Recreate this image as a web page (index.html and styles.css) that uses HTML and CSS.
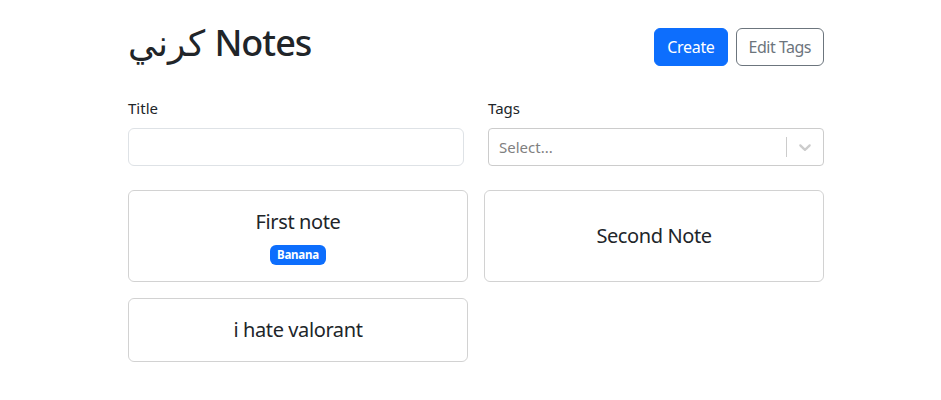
FILE: index.html
```html
<!DOCTYPE html>
<html lang="en">
<head>
<meta charset="utf-8">
<title>Notes</title>
<link rel="stylesheet" href="styles.css">
</head>
<body>
<div class="container">
  <div class="header">
    <h1 class="title">كرني <span class="title-latin">Notes</span></h1>
    <div class="actions">
      <button class="btn btn-primary">Create</button>
      <button class="btn btn-outline">Edit Tags</button>
    </div>
  </div>
  <form class="filters">
    <div class="field">
      <label class="label" for="title">Title</label>
      <input class="input" id="title" type="text">
    </div>
    <div class="field">
      <label class="label">Tags</label>
      <div class="select">
        <div class="select-value">Select...</div>
        <div class="select-indicators">
          <span class="select-sep"></span>
          <span class="select-arrow">
            <svg width="20" height="20" viewBox="0 0 20 20" aria-hidden="true"><path d="M4.516 7.548c0.436-0.446 1.043-0.481 1.576 0l3.908 3.747 3.908-3.747c0.533-0.481 1.141-0.446 1.574 0 0.436 0.445 0.408 1.197 0 1.615-0.406 0.418-4.695 4.502-4.695 4.502-0.217 0.223-0.502 0.335-0.787 0.335s-0.57-0.112-0.789-0.335c0 0-4.287-4.084-4.695-4.502s-0.436-1.17 0-1.615z"></path></svg>
          </span>
        </div>
      </div>
    </div>
  </form>
  <div class="notes">
    <a class="card" href="#">
      <span class="card-title">First note</span>
      <div class="tags"><span class="badge">Banana</span></div>
    </a>
    <a class="card" href="#">
      <span class="card-title">Second Note</span>
    </a>
    <a class="card" href="#">
      <span class="card-title">i hate valorant</span>
    </a>
  </div>
</div>
</body>
</html>
```

FILE: styles.css
```css
* { box-sizing: border-box; }
html, body { margin: 0; padding: 0; background: #fff; }
body {
  font-family: "Noto Sans", "DejaVu Sans", sans-serif;
  font-size: 16px;
  line-height: 1.5;
  color: #212529;
}
.container {
  width: 696px;
  margin-left: 128px;
  padding-top: 21px;
}
.header {
  display: flex;
  align-items: center;
  justify-content: space-between;
  margin-bottom: 24px;
}
.title {
  margin: 0 0 8px 0;
  font-size: 36px;
  font-weight: 500;
  line-height: 1.2;
}
.title-latin { letter-spacing: -1px; }
.actions { display: flex; gap: 8px; }
.btn {
  font-family: inherit;
  font-size: 16px;
  line-height: 1.5;
  padding: 6px 12px;
  border-radius: 6px;
  border: 1px solid transparent;
  background: transparent;
  cursor: pointer;
  letter-spacing: -0.3px;
}
.btn-primary { background: #0d6efd; border-color: #0d6efd; color: #fff; }
.btn-outline { border-color: #6c757d; color: #6c757d; letter-spacing: -0.5px; }
.filters {
  display: grid;
  grid-template-columns: 1fr 1fr;
  column-gap: 24px;
  margin: 0 0 24px 0;
}
.field { display: flex; flex-direction: column; }
.label { margin-bottom: 8px; font-size: 15px; line-height: 24px; }
.input {
  height: 38px;
  border: 1px solid #dee2e6;
  border-radius: 6px;
  padding: 6px 12px;
  font: inherit;
}
.select {
  height: 38px;
  border: 1px solid #ccc;
  border-radius: 4px;
  display: flex;
  align-items: center;
}
.select-value {
  flex: 1;
  padding: 2px 10px;
  color: #808080;
  font-size: 15px;
}
.select-indicators { display: flex; align-items: center; align-self: stretch; }
.select-sep {
  width: 1px;
  align-self: stretch;
  margin: 8px 0;
  background: #ccc;
}
.select-arrow { display: flex; padding: 8px; }
.select-arrow svg { fill: #ccc; }
.notes {
  display: grid;
  grid-template-columns: 1fr 1fr;
  gap: 16px;
}
.card {
  display: flex;
  flex-direction: column;
  align-items: center;
  justify-content: center;
  gap: 8px;
  padding: 16px;
  border: 1px solid rgba(0, 0, 0, 0.175);
  border-radius: 6px;
  color: inherit;
  text-decoration: none;
}
.card-title { font-size: 20px; line-height: 30px; letter-spacing: -0.4px; }
.tags { display: flex; gap: 4px; justify-content: center; }
.badge {
  display: inline-block;
  background: #0d6efd;
  color: #fff;
  font-size: 11.5px;
  font-weight: 700;
  line-height: 1;
  padding: 4px 7px 4.5px;
  border-radius: 6px;
  letter-spacing: -0.2px;
}
```
